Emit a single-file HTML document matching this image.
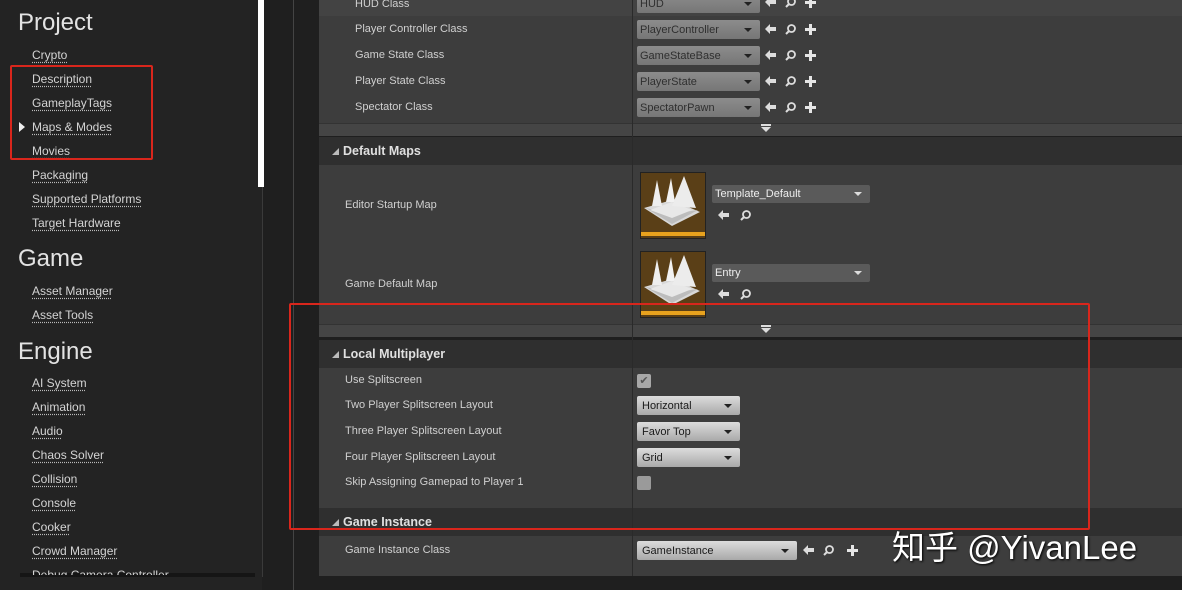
<!DOCTYPE html>
<html><head><meta charset="utf-8"><style>
*{margin:0;padding:0;box-sizing:border-box}
body{width:1182px;height:590px;background:#1f1f1f;position:relative;overflow:hidden;font-family:"Liberation Sans","Noto Sans CJK SC",sans-serif;color:#cfcfcf}
.a{position:absolute}
.h{font-size:24px;color:#e3e3e3;left:18px}
.l{left:32px;font-size:12px;color:#d4d4d4;text-decoration:underline dotted #bbb;text-underline-offset:3px}
.lab{font-size:11px;color:#d0d0d0;left:345px}
.sh{left:319px;width:863px;background:#2f2f2f;height:28px}
.sh span{position:absolute;left:24px;top:7px;font-size:12.5px;font-weight:bold;color:#e0e0e0}
.sh i{position:absolute;left:13px;top:11px;width:0;height:0;border-left:7px solid transparent;border-bottom:7px solid #bbb}
.sec{left:319px;width:863px;background:#3d3d3d}
.bar{left:319px;width:863px;height:13px;background:#454545;border-top:1px solid #333}
.bar b{position:absolute;left:442px;top:3px;width:0;height:0;border-left:5px solid transparent;border-right:5px solid transparent;border-top:5px solid #ddd}
.bar b:before{content:"";position:absolute;left:-5px;top:-8px;width:10px;height:2px;background:#ddd}
.cd{left:637px;height:19px;width:123px;background:linear-gradient(#8c8c8c,#767676);border-radius:2px;font-size:11px;color:#2f2f2f;padding:4px 0 0 3px}
.cd:after,.en:after,.dd:after{content:"";position:absolute;right:8px;top:8px;border-left:4px solid transparent;border-right:4px solid transparent;border-top:4px solid #222}
.en{left:637px;width:103px;height:19px;background:linear-gradient(#dcdcdc,#a9a9a9);border-radius:2px;font-size:11px;color:#1a1a1a;padding:4px 0 0 5px}
.dd{width:158px;height:18px;background:#5a5a5a;border-radius:2px;font-size:11px;color:#eee;padding:3px 0 0 3px}
.dd:after{border-top-color:#ddd;top:7px}
.th{width:66px;height:67px;background:#5a3f17;border:1px solid #222}
.th:after{content:"";position:absolute;left:0;bottom:2px;width:64px;height:4px;background:#e8a21e}
.red{border:2px solid #d9261c;border-radius:2px}
</style></head><body>
<svg width="0" height="0" style="position:absolute"><defs>
<g id="ar"><path d="M0,5 L5,0 L5,3 L11,3 L11,7 L5,7 L5,10 Z" fill="#ddd"/></g>
<g id="mg"><circle cx="6.5" cy="4.5" r="3.5" fill="none" stroke="#ddd" stroke-width="1.8"/><path d="M4,7 L1,10" stroke="#ddd" stroke-width="2"/></g>
<g id="pl"><path d="M4,0 H7 V4 H11 V7 H7 V11 H4 V7 H0 V4 H4 Z" fill="#e6e6e6"/></g>
</defs></svg>
<div class="a" style="left:0;top:0;width:262px;height:590px;background:#232323"></div>
<div class="a" style="left:258px;top:0;width:6px;height:187px;background:#fff"></div>
<div class="a" style="left:262px;top:187px;width:1px;height:390px;background:#3a3a3a"></div>
<div class="a" style="left:293px;top:0;width:1px;height:590px;background:#444"></div>
<div class="a" style="left:20px;top:573px;width:235px;height:4px;background:#151515"></div>
<div class="a h" style="top:9px">Project</div>
<div class="a l" style="top:48px">Crypto</div>
<div class="a l" style="top:72px">Description</div>
<div class="a l" style="top:96px">GameplayTags</div>
<div class="a" style="left:19px;top:122px;border-top:5px solid transparent;border-bottom:5px solid transparent;border-left:6px solid #eee"></div>
<div class="a l" style="top:120px">Maps &amp; Modes</div>
<div class="a l" style="top:144px">Movies</div>
<div class="a l" style="top:168px">Packaging</div>
<div class="a l" style="top:192px">Supported Platforms</div>
<div class="a l" style="top:216px">Target Hardware</div>
<div class="a h" style="top:245px">Game</div>
<div class="a l" style="top:284px">Asset Manager</div>
<div class="a l" style="top:308px">Asset Tools</div>
<div class="a h" style="top:338px">Engine</div>
<div class="a l" style="top:376px">AI System</div>
<div class="a l" style="top:400px">Animation</div>
<div class="a l" style="top:424px">Audio</div>
<div class="a l" style="top:448px">Chaos Solver</div>
<div class="a l" style="top:472px">Collision</div>
<div class="a l" style="top:496px">Console</div>
<div class="a l" style="top:520px">Cooker</div>
<div class="a l" style="top:544px">Crowd Manager</div>
<div class="a l" style="top:568px;height:7px;overflow:hidden">Debug Camera Controller</div>

<div class="a sec" style="top:0;height:124px"></div>
<div class="a" style="left:319px;top:0;width:863px;height:16px;background:#434343"></div>
<div class="a bar" style="top:123px"><b></b></div>
<div class="a sh" style="top:137px"><i></i><span>Default Maps</span></div>
<div class="a sec" style="top:165px;height:159px"></div>
<div class="a bar" style="top:324px"><b></b></div>
<div class="a sh" style="top:340px"><i></i><span>Local Multiplayer</span></div>
<div class="a sec" style="top:368px;height:140px"></div>
<div class="a sh" style="top:508px"><i></i><span>Game Instance</span></div>
<div class="a sec" style="top:536px;height:40px"></div>
<div class="a" style="left:632px;top:0;width:1px;height:576px;background:#2a2a2a"></div>

<div class="a lab" style="top:-2px;left:355px">HUD Class</div>
<div class="a lab" style="top:23px;left:355px">Player Controller Class</div>
<div class="a lab" style="top:49px;left:355px">Game State Class</div>
<div class="a lab" style="top:75px;left:355px">Player State Class</div>
<div class="a lab" style="top:101px;left:355px">Spectator Class</div>
<div class="a cd" style="top:-6px">HUD</div>
<div class="a cd" style="top:20px">PlayerController</div>
<div class="a cd" style="top:46px">GameStateBase</div>
<div class="a cd" style="top:72px">PlayerState</div>
<div class="a cd" style="top:98px">SpectatorPawn</div>
<svg class="a" style="left:765px;top:0" width="60" height="120">
<use href="#ar" x="0" y="-3"/><use href="#mg" x="20" y="-3"/><use href="#pl" x="40" y="-3"/>
<use href="#ar" x="0" y="24"/><use href="#mg" x="20" y="24"/><use href="#pl" x="40" y="24"/>
<use href="#ar" x="0" y="50"/><use href="#mg" x="20" y="50"/><use href="#pl" x="40" y="50"/>
<use href="#ar" x="0" y="76"/><use href="#mg" x="20" y="76"/><use href="#pl" x="40" y="76"/>
<use href="#ar" x="0" y="102"/><use href="#mg" x="20" y="102"/><use href="#pl" x="40" y="102"/>
</svg>

<div class="a lab" style="top:199px">Editor Startup Map</div>
<div class="a lab" style="top:278px">Game Default Map</div>
<div class="a th" style="left:640px;top:172px"></div>
<div class="a th" style="left:640px;top:251px"></div>
<svg class="a" style="left:642px;top:174px" width="60" height="56" viewBox="0 0 60 56"><polygon points="2,34 30,26 58,38 30,52" fill="#d8d8d8"/><polygon points="4,34 30,40 56,36 30,50" fill="#bdbdbd"/><polygon points="8,36 30,28 50,36 30,44" fill="#e8e8e8"/><polygon points="10,32 15,6 20,32" fill="#eee"/><polygon points="24,28 29,4 33,28" fill="#f2f2f2"/><polygon points="30,32 42,2 54,34" fill="#ececec"/></svg>
<svg class="a" style="left:642px;top:253px" width="60" height="56" viewBox="0 0 60 56"><polygon points="2,34 30,26 58,38 30,52" fill="#d8d8d8"/><polygon points="4,34 30,40 56,36 30,50" fill="#bdbdbd"/><polygon points="8,36 30,28 50,36 30,44" fill="#e8e8e8"/><polygon points="10,32 15,6 20,32" fill="#eee"/><polygon points="24,28 29,4 33,28" fill="#f2f2f2"/><polygon points="30,32 42,2 54,34" fill="#ececec"/></svg>
<div class="a dd" style="left:712px;top:185px">Template_Default</div>
<div class="a dd" style="left:712px;top:264px">Entry</div>
<svg class="a" style="left:718px;top:210px" width="40" height="90">
<use href="#ar" x="0" y="0"/><use href="#mg" x="22" y="0"/>
<use href="#ar" x="0" y="79"/><use href="#mg" x="22" y="79"/></svg>

<div class="a lab" style="top:374px">Use Splitscreen</div>
<div class="a lab" style="top:399px">Two Player Splitscreen Layout</div>
<div class="a lab" style="top:425px">Three Player Splitscreen Layout</div>
<div class="a lab" style="top:451px">Four Player Splitscreen Layout</div>
<div class="a lab" style="top:476px">Skip Assigning Gamepad to Player 1</div>
<div class="a" style="left:637px;top:374px;width:14px;height:14px;background:#a8a8a8;border-radius:2px;font-size:11px;color:#555;text-align:center;line-height:14px">✔</div>
<div class="a en" style="top:396px">Horizontal</div>
<div class="a en" style="top:422px">Favor Top</div>
<div class="a en" style="top:448px">Grid</div>
<div class="a" style="left:637px;top:476px;width:14px;height:14px;background:#9a9a9a;border-radius:2px"></div>

<div class="a lab" style="top:544px">Game Instance Class</div>
<div class="a en" style="top:541px;width:160px">GameInstance</div>
<svg class="a" style="left:803px;top:545px" width="60" height="14"><use href="#ar" x="0" y="0"/><use href="#mg" x="20" y="0"/><use href="#pl" x="44" y="0"/></svg>

<div class="a" style="left:892px;top:521px;font-size:33px;color:#fff;text-shadow:1px 1px 2px #000;white-space:nowrap">知乎 @YivanLee</div>

<div class="a red" style="left:10px;top:65px;width:143px;height:95px"></div>
<div class="a red" style="left:289px;top:303px;width:801px;height:227px"></div>
</body></html>
